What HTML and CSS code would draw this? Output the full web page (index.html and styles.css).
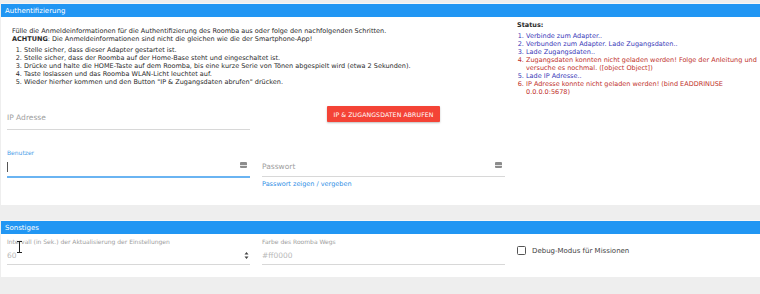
FILE: index.html
```html
<!DOCTYPE html>
<html lang="de">
<head>
<meta charset="utf-8">
<title>Roomba</title>
<link rel="stylesheet" href="styles.css">
</head>
<body>
<div class="page">
  <section class="card card-auth">
    <div class="card-header">Authentifizierung</div>
    <div class="row row-intro">
      <div class="intro">
        <p>Fülle die Anmeldeinformationen für die Authentifizierung des Roomba aus oder folge den nachfolgenden Schritten.<br><b>ACHTUNG</b>: Die Anmeldeinformationen sind nicht die gleichen wie die der Smartphone-App!</p>
        <ol>
          <li>Stelle sicher, dass dieser Adapter gestartet ist.</li>
          <li>Stelle sicher, dass der Roomba auf der Home-Base steht und eingeschaltet ist.</li>
          <li>Drücke und halte die HOME-Taste auf dem Roomba, bis eine kurze Serie von Tönen abgespielt wird (etwa 2 Sekunden).</li>
          <li>Taste loslassen und das Roomba WLAN-Licht leuchtet auf.</li>
          <li>Wieder hierher kommen und den Button "IP &amp; Zugangsdaten abrufen" drücken.</li>
        </ol>
      </div>
      <div class="status">
        <div class="status-title">Status:</div>
        <ol>
          <li class="ok">Verbinde zum Adapter..</li>
          <li class="ok">Verbunden zum Adapter. Lade Zugangsdaten..</li>
          <li class="ok">Lade Zugangsdaten..</li>
          <li class="err">Zugangsdaten konnten nicht geladen werden! Folge der Anleitung und versuche es nochmal. ([object Object])</li>
          <li class="ok">Lade IP Adresse..</li>
          <li class="err">IP Adresse konnte nicht geladen werden! (bind EADDRINUSE 0.0.0.0:5678)</li>
        </ol>
      </div>
    </div>
    <div class="row row-ip">
      <div class="field">
        <div class="input"><span class="placeholder">IP Adresse</span></div>
      </div>
      <div class="btn-cell"><button class="btn">IP &amp; ZUGANGSDATEN ABRUFEN</button></div>
    </div>
    <div class="row row-cred">
      <div class="field">
        <label class="label label-active">Benutzer</label>
        <div class="input input-active"><span class="caret"></span><span class="key-icon"></span></div>
      </div>
      <div class="field">
        <div class="input"><span class="placeholder">Passwort</span><span class="key-icon"></span></div>
        <a class="link">Passwort zeigen / vergeben</a>
      </div>
    </div>
  </section>

  <section class="card card-misc">
    <div class="card-header">Sonstiges</div>
    <div class="row row-misc">
      <div class="field">
        <label class="label">Intervall (in Sek.) der Aktualisierung der Einstellungen</label>
        <div class="input"><span class="value">60</span>
          <svg class="spinner" width="5" height="9" viewBox="0 0 5 9"><path d="M0.5 3.5 L2.5 1 L4.5 3.5 Z M0.5 5.5 L2.5 8 L4.5 5.5 Z" fill="#444"/></svg>
        </div>
        <svg class="ibeam" width="7" height="12" viewBox="0 0 7 12"><path d="M1 0.5 H6 M3.5 0.5 V11.5 M1 11.5 H6" stroke="#222" stroke-width="1" fill="none"/></svg>
      </div>
      <div class="field">
        <label class="label">Farbe des Roomba Wegs</label>
        <div class="input"><span class="value">#ff0000</span></div>
      </div>
      <div class="check">
        <span class="box"></span><span class="check-label">Debug-Modus für Missionen</span>
      </div>
    </div>
  </section>
</div>
</body>
</html>
```
FILE: styles.css
```css
* { box-sizing: border-box; }
html, body { margin: 0; padding: 0; }
body {
  background: #eeeeee;
  font-family: "DejaVu Sans", Verdana, sans-serif;
  font-size: 6.5px;
  color: #2a2a2a;
  width: 760px;
  height: 294px;
  overflow: hidden;
}
.page { padding-top: 3px; padding-left: 1px; }
.card { background: #fff; }
.card-header {
  background: #2196f3;
  color: #fff;
  height: 14px;
  line-height: 14px;
  padding-left: 4px;
  font-size: 7px;
  border-top: 1px solid #f6f6f6;
}
.card-auth { height: 202px; }
.card-misc { margin-top: 15px; height: 57px; }

.row {
  display: grid;
  grid-template-columns: 243px 243px 243px;
  column-gap: 12px;
  padding-left: 6px;
}
.row-intro { grid-template-columns: 498px 243px; height: 78px; }
.intro { padding-left: 5px; padding-top: 10px; line-height: 8px; }
.intro p { margin: 0; }
.intro ol { margin: 3px 0 0 0; padding-left: 12px; }
.status { padding-top: 4px; line-height: 8px; }
.status-title { font-weight: bold; font-size: 6.5px; }
.status ol { margin: 3px 0 0 0; padding-left: 9px; }
.status .ok { color: #3838b8; }
.status .err { color: #c0302a; }

.field { position: relative; }
.input {
  position: relative;
  height: 18px;
  border-bottom: 1px solid #d8d8d8;
  display: flex;
  align-items: center;
  font-size: 7.5px;
}
.placeholder { color: #9e9e9e; }
.value { color: #b8b8b8; }
.input-active { border-bottom: 2px solid #6ab4f2; }
.label { display: block; font-size: 6px; color: #9e9e9e; height: 9px; line-height: 9px; }
.label-active { color: #4a9ee8; }

.row-ip { padding-top: 10px; grid-template-columns: 243px 243px; }
.row-ip .input { height: 25px; }
.btn-cell { display: flex; justify-content: center; align-items: flex-start; padding-top: 1px; }
.btn {
  background: #f44336;
  color: #fff;
  border: none;
  height: 16px;
  width: 113px;
  font-family: inherit;
  font-size: 6.2px;
  letter-spacing: 0.1px;
  padding: 0;
  box-shadow: 0 1px 2px rgba(0,0,0,0.25);
  border-radius: 1px;
}

.row-cred { padding-top: 18px; grid-template-columns: 243px 243px; }
.row-cred .input { height: 20px; }
.row-cred .input-active { height: 21px; }
.row-cred .field:nth-child(2) { padding-top: 9px; }
.caret { width: 1px; height: 10px; background: #555; }
.key-icon {
  position: absolute;
  right: 3px;
  top: 5px;
  width: 7px;
  height: 6px;
  border-radius: 1px;
  background: #8c8c8c;
}
.key-icon::after {
  content: "";
  position: absolute;
  left: 0; right: 0; top: 2.5px;
  height: 1px;
  background: #e6e6e6;
}
.link { display: block; color: #2f8fe6; font-size: 6.5px; margin-top: 3px; }

.row-misc { padding-top: 3px; }
.row-misc .input { height: 19px; }
.spinner { position: absolute; right: 1px; top: 5px; }
.ibeam { position: absolute; left: 9px; top: 4px; }
.check { display: flex; align-items: center; padding-top: 5px; height: 22px; }
.box {
  width: 9px; height: 9px;
  border: 1.3px solid #555;
  border-radius: 1.5px;
  margin-right: 6px;
}
.check-label { font-size: 7px; color: #444; }
```
